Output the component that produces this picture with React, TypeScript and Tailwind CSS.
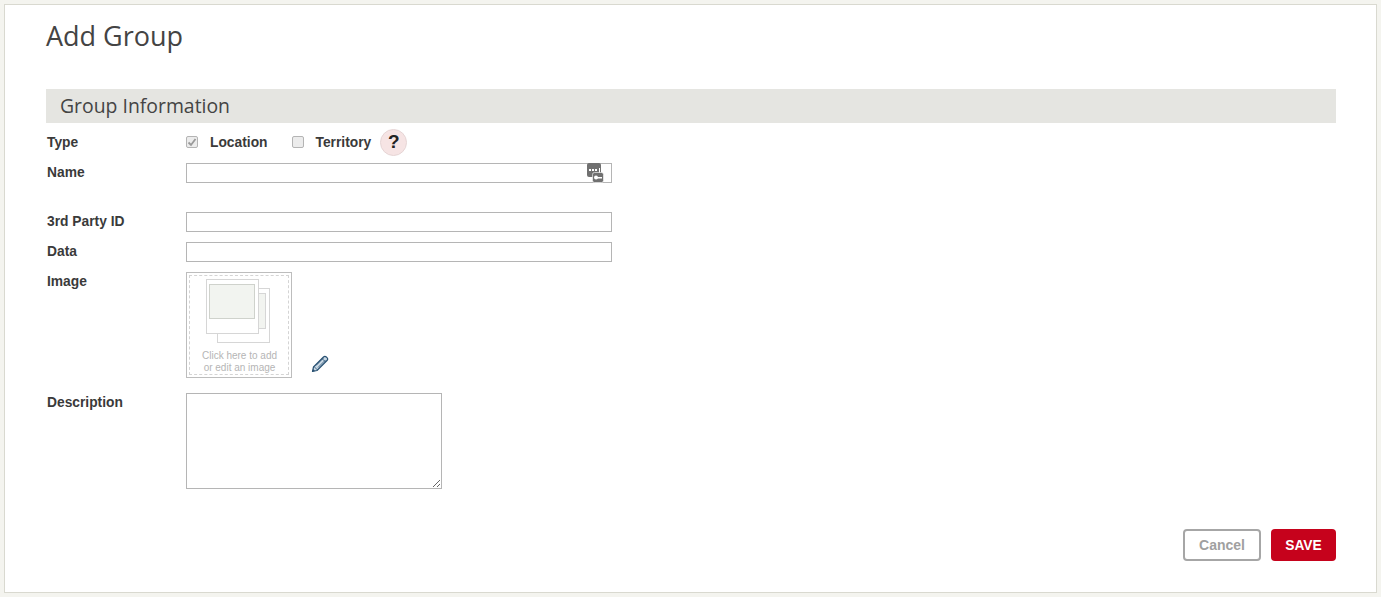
function FieldLabel({ children, className = "" }: { children: React.ReactNode; className?: string }) {
  return <div className={`w-[140px] shrink-0 pl-px text-[13.8px] font-bold text-[#3a3a3a] ${className}`}>{children}</div>
}

function KeyIcon() {
  return (
    <svg width="17" height="20" viewBox="0 0 17 20" className="absolute right-[8px] top-0">
      <rect x="0" y="0" width="14" height="14" rx="2" fill="#707070" />
      <rect x="2" y="6" width="2" height="2" fill="#fff" />
      <rect x="5" y="6" width="2" height="2" fill="#fff" />
      <rect x="8" y="6" width="2" height="2" fill="#fff" />
      <rect x="12" y="5" width="1" height="5" fill="#fff" />
      <rect x="5.500" y="9.500" width="11" height="10" rx="2" fill="#707070" stroke="#fff" strokeWidth="0.600" />
      <circle cx="9" cy="14.500" r="2" fill="#fff" />
      <rect x="10" y="14" width="5" height="1.500" fill="#fff" />
    </svg>
  )
}

function PencilIcon() {
  return (
    <svg width="18" height="18" viewBox="0 0 18 18" fill="none">
      <path d="M1.500 16.500l1-4.500L12.500 2c.8-.8 2-.8 2.800 0l.7.7c.8.8.8 2 0 2.800L6 15.500z" fill="#c9d8e4" stroke="#2a5273" strokeWidth="1.200" strokeLinejoin="round" />
      <path d="M3 11.500L6.500 15M11 3.500L14.500 7M5 10.500L12.500 3M7 12.500L14.500 5" stroke="#2a5273" strokeWidth="0.800" />
      <path d="M1.500 16.500l.6-2.600 2 2z" fill="#2a5273" />
    </svg>
  )
}

function Placeholder() {
  return (
    <svg width="66" height="66" viewBox="0 0 66 66" fill="none" className="absolute left-[16px] top-[3px]">
      <rect x="11.500" y="9.500" width="52" height="54" fill="#fff" stroke="#d6d6d6" />
      <rect x="49.500" y="14.500" width="10" height="35" fill="#f2f4f0" stroke="#d6d6d6" />
      <rect x="0.500" y="0.500" width="52" height="54" fill="#fff" stroke="#d6d6d6" />
      <rect x="3.500" y="5.500" width="45" height="34" fill="#f2f4f0" stroke="#cfd2cc" />
    </svg>
  )
}

function Check({ checked = false }: { checked?: boolean }) {
  return (
    <span className="flex h-[12px] w-[12px] items-center justify-center rounded-[2px] border border-[#b4b4b4] bg-[#ececec]">
      {checked && (
        <svg width="10" height="10" viewBox="0 0 10 10" fill="none">
          <path d="M1.500 5.500L4 8l4.500-6" stroke="#9a9a9a" strokeWidth="1.800" />
        </svg>
      )}
    </span>
  )
}

export default function App() {
  return (
    <div className="h-[597px] w-[1381px] overflow-hidden bg-[#f4f4ef] p-1 font-['Liberation_Sans',Arial,sans-serif]">
      <div className="h-[589px] border border-[#d9d9d0] bg-white pl-[41px] pr-[40px]">
        <h1 className="mt-[11px] h-[73px] font-['Open_Sans','Noto_Sans',sans-serif] text-[27px] leading-[40px] text-[#444]">
          Add Group
        </h1>
        <div className="flex h-[34px] items-center bg-[#e5e5e1] pl-[14px] font-['Open_Sans','Noto_Sans',sans-serif] text-[19.400px] text-[#444]">
          Group Information
        </div>

        <div className="mt-[5px] flex h-[28px] items-center">
          <FieldLabel className="pt-[2px]">Type</FieldLabel>
          <Check checked />
          <span className="ml-[12px] pt-[2px] text-[13.800px] font-bold text-[#3a3a3a]">Location</span>
          <span className="ml-[24px]">
            <Check />
          </span>
          <span className="ml-[12px] pt-[2px] text-[13.800px] font-bold text-[#3a3a3a]">Territory</span>
          <span className="ml-[9px] flex h-[27px] w-[27px] items-center justify-center rounded-full border border-[#e6d5d5] bg-[#f6e4e4] text-[19px] font-bold text-[#222]">
            ?
          </span>
        </div>

        <div className="mt-[7px] flex h-[20px]">
          <FieldLabel className="leading-[20px]">Name</FieldLabel>
          <div className="relative w-[426px]">
            <input className="block h-[20px] w-full border border-[#b5b5b5] bg-white" />
            <KeyIcon />
          </div>
        </div>

        <div className="mt-[29px] flex h-[20px]">
          <FieldLabel className="leading-[20px]">3rd Party ID</FieldLabel>
          <input className="block h-[20px] w-[426px] border border-[#b5b5b5] bg-white" />
        </div>

        <div className="mt-[10px] flex h-[20px]">
          <FieldLabel className="leading-[20px]">Data</FieldLabel>
          <input className="block h-[20px] w-[426px] border border-[#b5b5b5] bg-white" />
        </div>

        <div className="mt-[10px] flex h-[106px]">
          <FieldLabel className="leading-[20px]">Image</FieldLabel>
          <div className="relative h-[106px] w-[106px] border border-[#bdbdbd] p-[2px]">
            <div className="relative flex h-full w-full flex-col items-center justify-end border border-dashed border-[#d4d4d4] pl-px text-center text-[10px] leading-[12px] text-[#b5b5b5]">
              <Placeholder />
              <span>Click here to add</span>
              <span>or edit an image</span>
            </div>
          </div>
          <div className="ml-[19px] mt-[83px]">
            <PencilIcon />
          </div>
        </div>

        <div className="mt-[15px] flex h-[96px]">
          <FieldLabel className="leading-[20px]">Description</FieldLabel>
          <textarea className="block h-[96px] w-[256px] border border-[#b5b5b5] bg-white" />
        </div>

        <div className="mt-[40px] flex justify-end gap-[10px]">
          <button className="h-[32px] w-[78px] rounded-[4px] border-2 border-[#a6a6a6] bg-white text-[14px] font-bold text-[#a0a0a0]">
            Cancel
          </button>
          <button className="h-[32px] w-[65px] rounded-[4px] bg-[#c6021c] pt-[2px] text-[13.800px] font-bold text-white">SAVE</button>
        </div>
      </div>
    </div>
  )
}
